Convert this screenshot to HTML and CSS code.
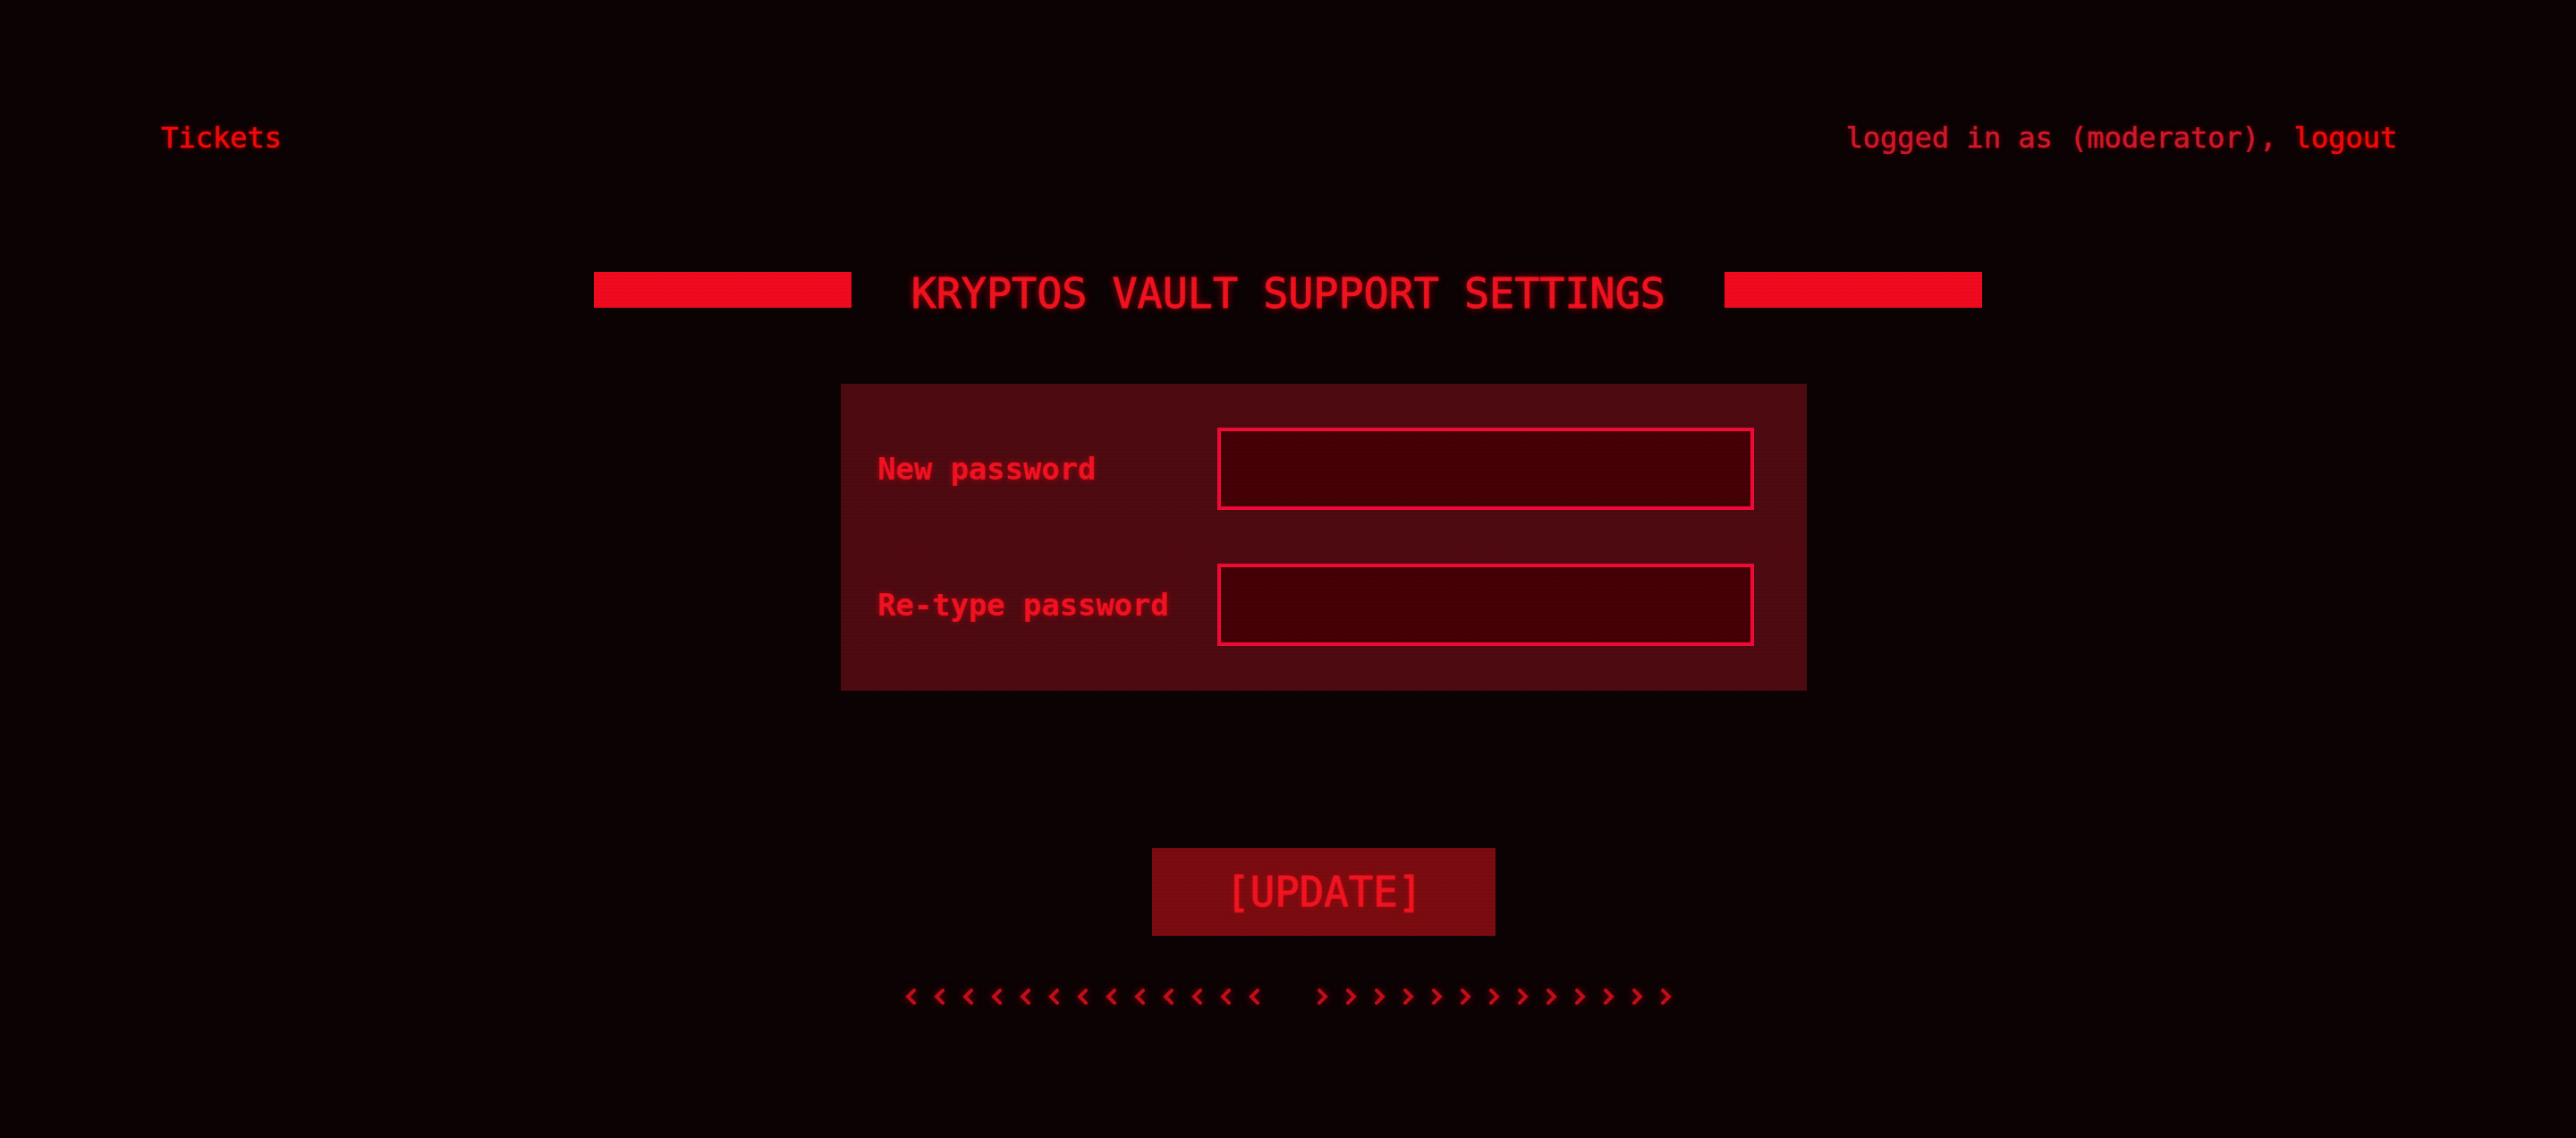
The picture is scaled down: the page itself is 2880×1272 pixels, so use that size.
FILE: index.html
```html
<!DOCTYPE html>
<html lang="en">
<head>
<meta charset="utf-8">
<title>Kryptos Vault Support Settings</title>
<link rel="stylesheet" href="styles.css">
</head>
<body>
<div class="page">
  <header class="topbar">
    <a class="nav-link" href="#">Tickets</a>
    <div class="session">logged in as (moderator), <a class="nav-link" href="#">logout</a></div>
  </header>

  <div class="title-row">
    <span class="title-bar"></span>
    <h1 class="title">KRYPTOS VAULT SUPPORT SETTINGS</h1>
    <span class="title-bar"></span>
  </div>

  <form class="settings-form">
    <div class="panel">
      <div class="field-row">
        <label class="field-label" for="pw1">New password</label>
        <input class="field-input" id="pw1" type="password">
      </div>
      <div class="field-row">
        <label class="field-label" for="pw2">Re-type password</label>
        <input class="field-input" id="pw2" type="password">
      </div>
    </div>
    <div class="actions">
      <button class="update-btn" type="button">[UPDATE]</button>
    </div>
  </form>

  <div class="arrows">
    <div class="arrow-group">
      <svg class="arrow" viewBox="0 0 12 18"><polyline points="10,2 3,9 10,16"/></svg>
      <svg class="arrow" viewBox="0 0 12 18"><polyline points="10,2 3,9 10,16"/></svg>
      <svg class="arrow" viewBox="0 0 12 18"><polyline points="10,2 3,9 10,16"/></svg>
      <svg class="arrow" viewBox="0 0 12 18"><polyline points="10,2 3,9 10,16"/></svg>
      <svg class="arrow" viewBox="0 0 12 18"><polyline points="10,2 3,9 10,16"/></svg>
      <svg class="arrow" viewBox="0 0 12 18"><polyline points="10,2 3,9 10,16"/></svg>
      <svg class="arrow" viewBox="0 0 12 18"><polyline points="10,2 3,9 10,16"/></svg>
      <svg class="arrow" viewBox="0 0 12 18"><polyline points="10,2 3,9 10,16"/></svg>
      <svg class="arrow" viewBox="0 0 12 18"><polyline points="10,2 3,9 10,16"/></svg>
      <svg class="arrow" viewBox="0 0 12 18"><polyline points="10,2 3,9 10,16"/></svg>
      <svg class="arrow" viewBox="0 0 12 18"><polyline points="10,2 3,9 10,16"/></svg>
      <svg class="arrow" viewBox="0 0 12 18"><polyline points="10,2 3,9 10,16"/></svg>
      <svg class="arrow" viewBox="0 0 12 18"><polyline points="10,2 3,9 10,16"/></svg>
    </div>
    <div class="arrow-group">
      <svg class="arrow" viewBox="0 0 12 18"><polyline points="2,2 9,9 2,16"/></svg>
      <svg class="arrow" viewBox="0 0 12 18"><polyline points="2,2 9,9 2,16"/></svg>
      <svg class="arrow" viewBox="0 0 12 18"><polyline points="2,2 9,9 2,16"/></svg>
      <svg class="arrow" viewBox="0 0 12 18"><polyline points="2,2 9,9 2,16"/></svg>
      <svg class="arrow" viewBox="0 0 12 18"><polyline points="2,2 9,9 2,16"/></svg>
      <svg class="arrow" viewBox="0 0 12 18"><polyline points="2,2 9,9 2,16"/></svg>
      <svg class="arrow" viewBox="0 0 12 18"><polyline points="2,2 9,9 2,16"/></svg>
      <svg class="arrow" viewBox="0 0 12 18"><polyline points="2,2 9,9 2,16"/></svg>
      <svg class="arrow" viewBox="0 0 12 18"><polyline points="2,2 9,9 2,16"/></svg>
      <svg class="arrow" viewBox="0 0 12 18"><polyline points="2,2 9,9 2,16"/></svg>
      <svg class="arrow" viewBox="0 0 12 18"><polyline points="2,2 9,9 2,16"/></svg>
      <svg class="arrow" viewBox="0 0 12 18"><polyline points="2,2 9,9 2,16"/></svg>
      <svg class="arrow" viewBox="0 0 12 18"><polyline points="2,2 9,9 2,16"/></svg>
    </div>
  </div>
</div>
</body>
</html>
```

FILE: styles.css
```css
* { box-sizing: border-box; }

html, body {
  margin: 0;
  padding: 0;
  background: #0b0304;
}

body {
  font-family: "DejaVu Sans Mono", "Liberation Mono", monospace;
  color: #ff1020;
  min-height: 1272px;
  overflow: hidden;
}

body::after {
  content: "";
  position: fixed;
  inset: 0;
  pointer-events: none;
  background: repeating-linear-gradient(
    to bottom,
    rgba(30, 8, 10, 0.06) 0px,
    rgba(30, 8, 10, 0.06) 2px,
    rgba(0, 0, 0, 0.08) 2px,
    rgba(0, 0, 0, 0.08) 4px
  );
}

.page {
  padding-top: 134px;
}

.topbar {
  display: flex;
  justify-content: space-between;
  padding: 0 200px 0 180px;
  font-size: 32px;
  line-height: 40px;
  -webkit-text-stroke: 0.6px currentColor;
}

.nav-link {
  color: #ff0a0a;
  text-decoration: none;
  text-shadow: 0 0 6px rgba(255, 0, 0, 0.6);
}

.session {
  color: #dc1a2c;
  text-shadow: 0 0 6px rgba(220, 0, 20, 0.5);
}

.title-row {
  margin-top: 130px;
  display: flex;
  justify-content: center;
  align-items: flex-start;
  gap: 66px;
}

.title-bar {
  width: 288px;
  height: 40px;
  background: #ff0b20;
  flex: none;
}

.title {
  margin: 0;
  font-size: 46.7px;
  line-height: 48px;
  font-weight: normal;
  color: #ff1421;
  -webkit-text-stroke: 0.8px #ff1421;
  text-shadow: 0 0 8px rgba(255, 0, 20, 0.7);
  white-space: nowrap;
}

.settings-form {
  width: 1080px;
  margin: 77px 0 0 calc(50% - 500px);
}

.panel {
  background: #520b12;
  padding: 49px 59px 50px 41px;
  display: flex;
  flex-direction: column;
  gap: 60px;
}

.field-row {
  display: flex;
  align-items: center;
}

.field-label {
  width: 380px;
  flex: none;
  font-size: 33.8px;
  font-weight: bold;
  color: #ff1424;
  text-shadow: 0 0 6px rgba(255, 0, 20, 0.6);
}

.field-input {
  width: 600px;
  height: 92px;
  border: 4px solid #ff0a3a;
  background: #480005;
  outline: none;
  margin: 0;
  padding: 0 16px;
  color: #ff1424;
  font-family: inherit;
  font-size: 32px;
}

.actions {
  display: flex;
  justify-content: center;
  margin-top: 176px;
}

.update-btn {
  width: 384px;
  height: 98px;
  border: none;
  background: #820c11;
  color: #ff1622;
  font-family: "DejaVu Sans Mono", "Liberation Mono", monospace;
  font-size: 45.7px;
  padding: 0;
  -webkit-text-stroke: 0.8px #ff1622;
  text-shadow: 0 0 6px rgba(255, 0, 20, 0.45);
  cursor: pointer;
}

.arrows {
  margin-top: 59px;
  display: flex;
  justify-content: center;
  gap: 65px;
}

.arrow-group {
  display: flex;
  gap: 20px;
}

.arrow {
  width: 12px;
  height: 18px;
  display: block;
  filter: drop-shadow(0 0 4px rgba(255, 0, 20, 0.5));
}

.arrow polyline {
  fill: none;
  stroke: #cc0f1a;
  stroke-width: 4;
  stroke-linecap: square;
  stroke-linejoin: miter;
}
```
